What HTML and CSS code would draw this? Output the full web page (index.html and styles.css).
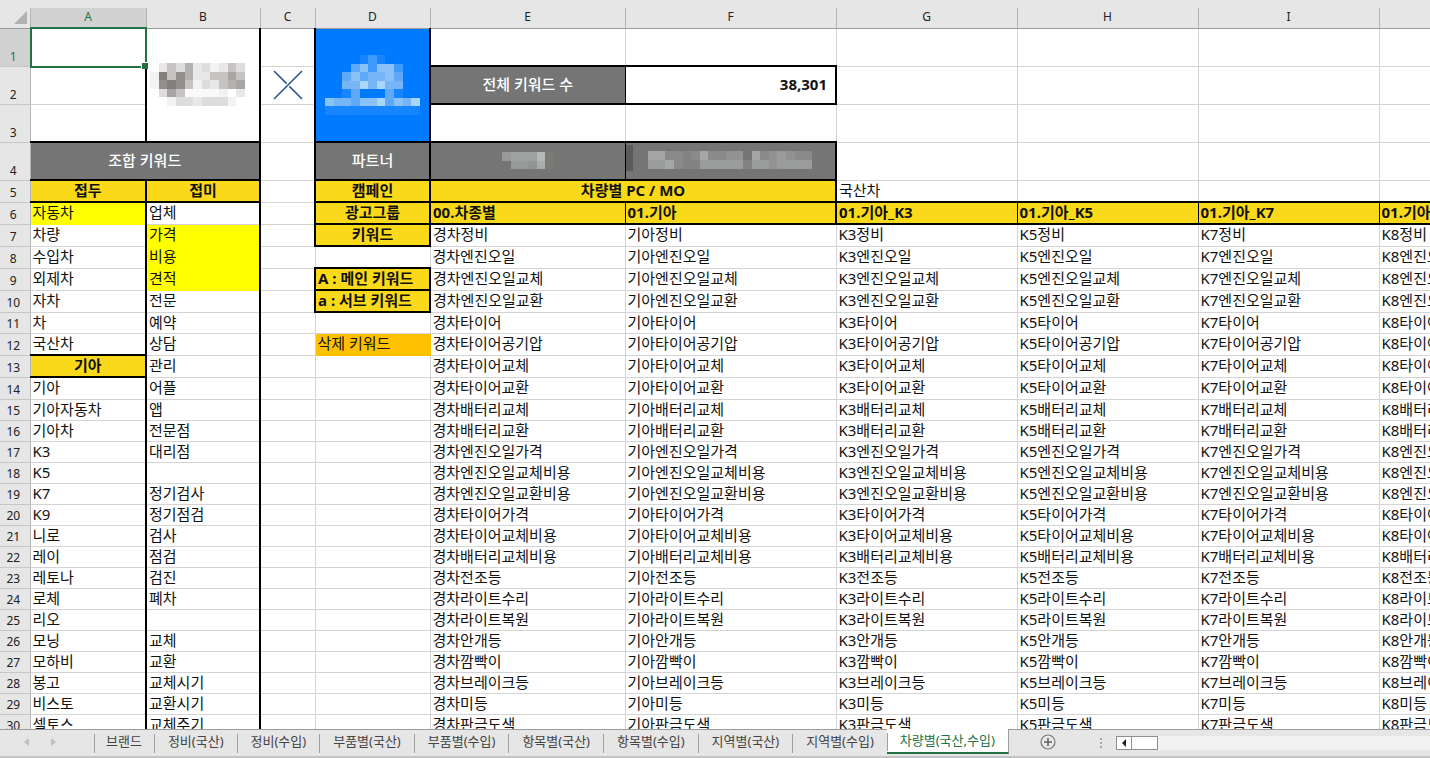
FILE: index.html
```
<!DOCTYPE html>
<html lang="ko">
<head>
<meta charset="utf-8">
<title>차량별(국산,수입)</title>
<link rel="stylesheet" href="styles.css">
</head>
<body>
<main class="sheet">
<table class="grid">
<colgroup><col class="c-head"><col class="c-a"><col class="c-b"><col class="c-c"><col class="c-d"><col class="c-e"><col class="c-f"><col class="c-g"><col class="c-g"><col class="c-g"><col></colgroup>
<thead>
<tr><th class="corner"><svg width="13" height="13" viewBox="0 0 13 13" aria-hidden="true"><path d="M13 0V13H0Z" fill="#b1b1b1"/></svg></th><th scope="col" class="active">A</th><th scope="col">B</th><th scope="col">C</th><th scope="col">D</th><th scope="col">E</th><th scope="col">F</th><th scope="col">G</th><th scope="col">H</th><th scope="col">I</th><th scope="col"></th></tr>
</thead>
<tbody>
<tr class="tall"><th scope="row" class="active">1</th><td class="vr selected"><span class="cursor"></span></td>
<td class="vr hb logo brand" rowspan="3"><svg width="95" height="43" viewBox="0 0 11 5" preserveAspectRatio="none" shape-rendering="crispEdges" aria-hidden="true">
<path fill="#e8e8e8" d="M1 0h1v1h-1zM5 0h1v1h-1zM8 0h1v1h-1zM5 1h2v1h-2zM7 2h1v1h-1zM5 4h1v1h-1zM10 3h1v1h-1z"/>
<path fill="#c6c3c2" d="M2 0h1v1h-1zM9 0h1v1h-1zM2 1h1v1h-1zM7 1h2v1h-2zM10 1h1v1h-1zM4 2h1v1h-1zM8 2h1v1h-1zM3 3h1v1h-1z"/>
<path fill="#dedddd" d="M3 0h1v1h-1zM6 0h1v1h-1zM10 0h1v1h-1zM6 2h1v1h-1zM1 3h1v1h-1zM3 4h2v1h-2zM6 4h3v1h-3z"/>
<path fill="#b4b1b0" d="M4 0h1v2h-1zM9 2h1v1h-1z"/>
<path fill="#f2f2f2" d="M7 0h1v1h-1zM0 1h1v2h-1zM5 2h1v1h-1zM8 3h1v1h-1zM2 4h1v1h-1zM9 4h1v1h-1z"/>
<path fill="#a9a5a4" d="M9 1h1v1h-1zM10 2h1v1h-1zM2 3h1v1h-1z"/>
<path fill="#837f7d" d="M1 1h1v1h-1zM2 2h1v1h-1z"/>
<path fill="#938f8d" d="M3 1h1v2h-1zM1 2h1v1h-1z"/>
<path fill="#fafafa" d="M4 3h4v1h-4z"/></svg></td>
<td class="vr"></td>
<td class="vr hb logo blue" rowspan="3"><svg width="95" height="60" viewBox="0 0 11 7" preserveAspectRatio="none" shape-rendering="crispEdges" aria-hidden="true">
<path fill="#1685ff" d="M4 0h1v1h-1zM6 0h1v1h-1zM2 4h1v1h-1zM8 4h1v1h-1zM0 6h11v1h-11z"/>
<path fill="#3e9afb" d="M5 0h1v2h-1zM8 1h1v1h-1z"/>
<path fill="#5eaaf8" d="M3 1h1v1h-1zM2 2h1v1h-1zM4 2h1v1h-1zM8 2h1v1h-1zM3 4h1v2h-1zM7 4h1v2h-1z"/>
<path fill="#76b6f6" d="M5 2h2v1h-2zM2 3h2v1h-2zM5 3h1v1h-1zM7 3h2v1h-2zM1 5h2v1h-2zM9 5h1v1h-1z"/>
<path fill="#8ac2f7" d="M4 1h1v1h-1zM6 1h2v1h-2zM3 2h1v1h-1zM7 2h1v1h-1zM0 5h1v1h-1zM4 5h2v1h-2zM8 5h1v1h-1z"/>
<path fill="#abd6fb" d="M4 3h1v1h-1zM6 3h1v1h-1zM6 5h1v1h-1zM10 5h1v1h-1z"/></svg></td>
<td class="hb"></td><td class="hb"></td><td></td><td></td><td></td><td></td></tr>
<tr class="tall"><th scope="row">2</th><td class="vr"></td><td class="vr cross"><svg width="30" height="30" viewBox="0 0 30 30" aria-label="×"><path d="M1 1 13.6 13.6M16.4 16.4 29 29M29 1 1 29" stroke="#2f5597" stroke-width="1.6" fill="none"/></svg></td><td class="gray hb vt">전체 키워드 수</td><td class="total hb vr">38,301</td><td></td><td></td><td></td><td></td></tr>
<tr class="tall"><th scope="row">3</th><td class="vr hb"></td><td class="vr"></td><td class="hb"></td><td class="hb"></td><td></td><td></td><td></td><td></td></tr>
<tr class="tall"><th scope="row">4</th><td class="gray hb vr" colspan="2">조합 키워드</td><td class="vr"></td><td class="gray hb vr">파트너</td>
<td class="gray hb vt mosaic"><svg width="52" height="17" viewBox="0 0 6 2" preserveAspectRatio="none" shape-rendering="crispEdges" aria-hidden="true"><path fill="#989a9a" d="M0 0h1v1h-1zM1 1h2v1h-2z"/><path fill="#9fa1a1" d="M1 0h3v1h-3z"/><path fill="#939595" d="M3 1h1v1h-1z"/><path fill="#b4b8b8" d="M4 0h1v1h-1z"/><path fill="#aaacac" d="M4 1h1v1h-1z"/><path fill="#7c7976" d="M5 0h1v2h-1z"/></svg></td>
<td class="gray hb vr mosaic"><span class="patch"></span><svg width="164" height="18" viewBox="0 0 19 2" preserveAspectRatio="none" shape-rendering="crispEdges" aria-hidden="true"><path fill="#8a8a8a" d="M2 0h2v1h-2zM5 0h1v1h-1zM7 0h2v1h-2zM13 0h1v1h-1zM17 0h2v1h-2zM3 1h1v1h-1z"/><path fill="#828282" d="M4 0h1v2h-1zM5 1h1v1h-1zM11 1h1v1h-1z"/><path fill="#a5a6a6" d="M0 0h2v1h-2zM6 0h1v1h-1zM12 0h1v1h-1zM2 1h1v1h-1z"/><path fill="#9a9b9b" d="M0 1h2v1h-2zM6 1h5v1h-5zM12 1h2v1h-2zM15 1h4v1h-4zM15 0h1v1h-1z"/><path fill="#929292" d="M9 0h2v1h-2zM14 0h1v2h-1zM16 0h1v1h-1z"/></svg></td><td></td><td></td><td></td><td></td></tr>
<tr><th scope="row">5</th><td class="gold hb vr">접두</td><td class="gold hb vr">접미</td><td class="vr"></td><td class="gold hb vr">캠페인</td><td class="gold hb vr" colspan="2">차량별 PC / MO</td><td class="hb">국산차</td><td class="hb"></td><td class="hb"></td><td class="hb"></td></tr>
<tr><th scope="row">6</th><td class="yellow vr">자동차</td><td class="vr">업체</td><td class="vr"></td><td class="gold hb vr">광고그룹</td><td class="gold left hb vt">00.차종별</td><td class="gold left hb vr">01.기아</td><td class="gold left hb vt">01.기아_K3</td><td class="gold left hb vt">01.기아_K5</td><td class="gold left hb vt">01.기아_K7</td><td class="gold left hb vt">01.기아_K8</td></tr>
<tr><th scope="row">7</th><td class="vr">차량</td><td class="yellow vr">가격</td><td class="vr"></td><td class="gold hb vr">키워드</td><td>경차정비</td><td>기아정비</td><td>K3정비</td><td>K5정비</td><td>K7정비</td><td>K8정비</td></tr>
<tr><th scope="row">8</th><td class="vr">수입차</td><td class="yellow vr">비용</td><td></td><td class="hb"></td><td>경차엔진오일</td><td>기아엔진오일</td><td>K3엔진오일</td><td>K5엔진오일</td><td>K7엔진오일</td><td>K8엔진오일</td></tr>
<tr><th scope="row">9</th><td class="vr">외제차</td><td class="yellow vr">견적</td><td class="vr"></td><td class="gold left hb vr">A : 메인 키워드</td><td>경차엔진오일교체</td><td>기아엔진오일교체</td><td>K3엔진오일교체</td><td>K5엔진오일교체</td><td>K7엔진오일교체</td><td>K8엔진오일교체</td></tr>
<tr><th scope="row">10</th><td class="vr">자차</td><td class="vr">전문</td><td class="vr"></td><td class="gold left hb vr">a : 서브 키워드</td><td>경차엔진오일교환</td><td>기아엔진오일교환</td><td>K3엔진오일교환</td><td>K5엔진오일교환</td><td>K7엔진오일교환</td><td>K8엔진오일교환</td></tr>
<tr class="low"><th scope="row">11</th><td class="vr">차</td><td class="vr">예약</td><td></td><td></td><td>경차타이어</td><td>기아타이어</td><td>K3타이어</td><td>K5타이어</td><td>K7타이어</td><td>K8타이어</td></tr>
<tr><th scope="row">12</th><td class="vr hb">국산차</td><td class="vr">상담</td><td></td><td class="orange">삭제 키워드</td><td>경차타이어공기압</td><td>기아타이어공기압</td><td>K3타이어공기압</td><td>K5타이어공기압</td><td>K7타이어공기압</td><td>K8타이어공기압</td></tr>
<tr><th scope="row">13</th><td class="gold vr hb">기아</td><td class="vr">관리</td><td></td><td></td><td>경차타이어교체</td><td>기아타이어교체</td><td>K3타이어교체</td><td>K5타이어교체</td><td>K7타이어교체</td><td>K8타이어교체</td></tr>
<tr><th scope="row">14</th><td class="vr">기아</td><td class="vr">어플</td><td></td><td></td><td>경차타이어교환</td><td>기아타이어교환</td><td>K3타이어교환</td><td>K5타이어교환</td><td>K7타이어교환</td><td>K8타이어교환</td></tr>
<tr class="low"><th scope="row">15</th><td class="vr">기아자동차</td><td class="vr">앱</td><td></td><td></td><td>경차배터리교체</td><td>기아배터리교체</td><td>K3배터리교체</td><td>K5배터리교체</td><td>K7배터리교체</td><td>K8배터리교체</td></tr>
<tr class="low"><th scope="row">16</th><td class="vr">기아차</td><td class="vr">전문점</td><td></td><td></td><td>경차배터리교환</td><td>기아배터리교환</td><td>K3배터리교환</td><td>K5배터리교환</td><td>K7배터리교환</td><td>K8배터리교환</td></tr>
<tr class="low"><th scope="row">17</th><td class="vr">K3</td><td class="vr">대리점</td><td></td><td></td><td>경차엔진오일가격</td><td>기아엔진오일가격</td><td>K3엔진오일가격</td><td>K5엔진오일가격</td><td>K7엔진오일가격</td><td>K8엔진오일가격</td></tr>
<tr class="low"><th scope="row">18</th><td class="vr">K5</td><td class="vr"></td><td></td><td></td><td>경차엔진오일교체비용</td><td>기아엔진오일교체비용</td><td>K3엔진오일교체비용</td><td>K5엔진오일교체비용</td><td>K7엔진오일교체비용</td><td>K8엔진오일교체비용</td></tr>
<tr class="low"><th scope="row">19</th><td class="vr">K7</td><td class="vr">정기검사</td><td></td><td></td><td>경차엔진오일교환비용</td><td>기아엔진오일교환비용</td><td>K3엔진오일교환비용</td><td>K5엔진오일교환비용</td><td>K7엔진오일교환비용</td><td>K8엔진오일교환비용</td></tr>
<tr class="low"><th scope="row">20</th><td class="vr">K9</td><td class="vr">정기점검</td><td></td><td></td><td>경차타이어가격</td><td>기아타이어가격</td><td>K3타이어가격</td><td>K5타이어가격</td><td>K7타이어가격</td><td>K8타이어가격</td></tr>
<tr class="low"><th scope="row">21</th><td class="vr">니로</td><td class="vr">검사</td><td></td><td></td><td>경차타이어교체비용</td><td>기아타이어교체비용</td><td>K3타이어교체비용</td><td>K5타이어교체비용</td><td>K7타이어교체비용</td><td>K8타이어교체비용</td></tr>
<tr class="low"><th scope="row">22</th><td class="vr">레이</td><td class="vr">점검</td><td></td><td></td><td>경차배터리교체비용</td><td>기아배터리교체비용</td><td>K3배터리교체비용</td><td>K5배터리교체비용</td><td>K7배터리교체비용</td><td>K8배터리교체비용</td></tr>
<tr class="low"><th scope="row">23</th><td class="vr">레토나</td><td class="vr">검진</td><td></td><td></td><td>경차전조등</td><td>기아전조등</td><td>K3전조등</td><td>K5전조등</td><td>K7전조등</td><td>K8전조등</td></tr>
<tr class="low"><th scope="row">24</th><td class="vr">로체</td><td class="vr">폐차</td><td></td><td></td><td>경차라이트수리</td><td>기아라이트수리</td><td>K3라이트수리</td><td>K5라이트수리</td><td>K7라이트수리</td><td>K8라이트수리</td></tr>
<tr class="low"><th scope="row">25</th><td class="vr">리오</td><td class="vr"></td><td></td><td></td><td>경차라이트복원</td><td>기아라이트복원</td><td>K3라이트복원</td><td>K5라이트복원</td><td>K7라이트복원</td><td>K8라이트복원</td></tr>
<tr class="low"><th scope="row">26</th><td class="vr">모닝</td><td class="vr">교체</td><td></td><td></td><td>경차안개등</td><td>기아안개등</td><td>K3안개등</td><td>K5안개등</td><td>K7안개등</td><td>K8안개등</td></tr>
<tr class="low"><th scope="row">27</th><td class="vr">모하비</td><td class="vr">교환</td><td></td><td></td><td>경차깜빡이</td><td>기아깜빡이</td><td>K3깜빡이</td><td>K5깜빡이</td><td>K7깜빡이</td><td>K8깜빡이</td></tr>
<tr class="low"><th scope="row">28</th><td class="vr">봉고</td><td class="vr">교체시기</td><td></td><td></td><td>경차브레이크등</td><td>기아브레이크등</td><td>K3브레이크등</td><td>K5브레이크등</td><td>K7브레이크등</td><td>K8브레이크등</td></tr>
<tr class="low"><th scope="row">29</th><td class="vr">비스토</td><td class="vr">교환시기</td><td></td><td></td><td>경차미등</td><td>기아미등</td><td>K3미등</td><td>K5미등</td><td>K7미등</td><td>K8미등</td></tr>
<tr class="low"><th scope="row">30</th><td class="vr">셀토스</td><td class="vr">교체주기</td><td></td><td></td><td>경차판금도색</td><td>기아판금도색</td><td>K3판금도색</td><td>K5판금도색</td><td>K7판금도색</td><td>K8판금도색</td></tr>
</tbody>
</table>
</main>
<footer class="bar">
<div class="steps">
<button type="button" aria-label="이전 시트"><svg width="5" height="8" viewBox="0 0 5 8"><path d="M5 0V8L0 4Z" fill="#c0c0c0"/></svg></button>
<button type="button" aria-label="다음 시트"><svg width="5" height="8" viewBox="0 0 5 8"><path d="M0 0V8L5 4Z" fill="#c0c0c0"/></svg></button>
</div>
<nav class="tabs">
<button type="button" class="short">브랜드</button><button type="button">정비(국산)</button><button type="button">정비(수입)</button><button type="button">부품별(국산)</button><button type="button">부품별(수입)</button><button type="button">항목별(국산)</button><button type="button">항목별(수입)</button><button type="button">지역별(국산)</button><button type="button">지역별(수입)</button><button type="button" class="current">차량별(국산,수입)</button>
</nav>
<button type="button" class="add" aria-label="새 시트"><svg width="16" height="16" viewBox="0 0 16 16"><circle cx="8" cy="8" r="7" fill="none" stroke="#777" stroke-width="1.2"/><path d="M8 4V12M4 8H12" stroke="#666" stroke-width="1.6"/></svg></button>
<svg class="grip" width="2" height="11" viewBox="0 0 2 11" aria-hidden="true"><path d="M0 0h2v2H0zM0 4h2v2H0zM0 8h2v2H0z" fill="#a6a6a6"/></svg>
<div class="scroll">
<button type="button" aria-label="왼쪽으로"><svg width="4" height="8" viewBox="0 0 4 8"><path d="M4 0V8L0 4Z" fill="#222"/></svg></button>
<span class="thumb"></span>
</div>
</footer>
</body>
</html>
```

FILE: styles.css
```
* { box-sizing: border-box; }
body {
  margin: 0;
  height: 100vh;
  display: flex;
  flex-direction: column;
  background: #e6e6e6;
  color: #111;
  font: 15px/20px "Noto Sans", "Noto Sans CJK KR", sans-serif;
}
button {
  border: 0;
  padding: 0;
  background: none;
  color: inherit;
  font: inherit;
}
svg { display: block; }

.sheet {
  flex: 1;
  min-height: 0;
  overflow: hidden;
  padding-top: 8px;
}
.grid {
  width: max(100%, 1560px);
  table-layout: fixed;
  border-collapse: collapse;
}
.c-head { width: 30px; }
.c-a { width: 116px; }
.c-b { width: 114px; }
.c-c { width: 55px; }
.c-d { width: 115px; }
.c-e { width: 195px; }
.c-f { width: 211px; }
.c-g { width: 181px; }

.grid th {
  padding: 0;
  background: #e6e6e6;
  border-right: 1px solid #b4b4b4;
  border-bottom: 1px solid #c6c6c6;
  font-size: 12px;
  font-weight: 400;
  line-height: 16px;
  color: #222;
}
.grid thead th {
  height: 20px;
  padding-bottom: 1px;
  border-bottom-color: #9b9b9b;
}
.grid th.active {
  background: #d2d2d2;
  color: #217346;
}
.grid .corner svg { margin: 0 3px 0 auto; }
.grid tbody th {
  vertical-align: bottom;
  padding: 0 3px 1px 0;
}
.grid td {
  padding: 0 2px 2px;
  background: #fff;
  border-right: 1px solid #d4d4d4;
  border-bottom: 1px solid #d4d4d4;
  white-space: nowrap;
  overflow: hidden;
  line-height: 18px;
}
.grid tbody tr { height: 22px; }
.grid tbody tr.low { height: 21px; }
.grid tbody tr.tall { height: 38px; }

.grid td.gray {
  background: #757575;
  color: #fff;
  font-weight: 500;
  text-align: center;
}
.grid td.gold {
  background: #fad91a;
  font-weight: 700;
  text-align: center;
}
.grid td.left { text-align: left; }
.grid td.yellow {
  background: #ff0;
  border-bottom-color: #ff0;
}
.grid td.orange {
  background: #ffc000;
  border-color: #ffc000;
}
.grid td.total {
  padding-right: 8px;
  font-weight: 700;
  text-align: right;
}
.grid td.vt { border-right: 1px solid #000; }
.grid td.vr { border-right: 2px solid #000; }
.grid td.hb { border-bottom: 2px solid #000; }

.grid td.logo {
  padding-bottom: 0;
  vertical-align: middle;
}
.grid td.logo svg { margin: 0 auto; }
.grid td.brand svg { margin-left: 1px; }
.grid td.blue { background: #007bff; }
.grid td.cross { padding-bottom: 0; }
.grid td.cross svg { margin: 0 auto; }
.grid td.mosaic { position: relative; }
.grid td.mosaic svg { margin: 0 auto; }
.patch {
  position: absolute;
  left: -1px;
  top: 2px;
  width: 8px;
  height: 26px;
  background: #5b5b5b;
}

.grid td.selected {
  position: relative;
  overflow: visible;
}
.cursor {
  position: absolute;
  inset: -2px -2px -2px -1px;
  border: 2px solid #217346;
}
.cursor::after {
  content: "";
  position: absolute;
  right: -3px;
  bottom: -3px;
  width: 6px;
  height: 6px;
  background: #217346;
  border: 1px solid #fff;
  border-width: 1px 0 0 1px;
}

.bar {
  display: flex;
  height: 29px;
  border-top: 1px solid #9b9b9b;
  border-bottom: 2px solid #c4c4c4;
  background: #e6e6e6;
  color: #444;
  font-size: 13px;
}
.steps {
  width: 94px;
  height: 24px;
  display: flex;
  align-items: center;
  gap: 22px;
  padding-left: 24px;
}
.tabs {
  display: flex;
  height: 24px;
}
.tabs button {
  position: relative;
  padding: 0 13px 3px 14px;
  white-space: nowrap;
}
.tabs .short { padding: 0 12px 3px; }
.tabs button::before {
  content: "";
  position: absolute;
  left: 0;
  top: 4px;
  bottom: 1px;
  border-left: 1px solid #a0a0a0;
}
.tabs .current {
  margin-top: -1px;
  padding: 0 13px 1px;
  background: #fff;
  border-right: 1px solid #a0a0a0;
  border-bottom: 2px solid #217346;
  color: #217346;
}
.add {
  width: 16px;
  margin: 0 44px 2px 31px;
}
.grip { margin-top: 8px; }
.scroll {
  flex: 1;
  display: flex;
  height: 14px;
  margin: 6px 0 0 14px;
  background: #f2f2f2;
}
.scroll button,
.thumb {
  background: #fff;
  border: 1px solid #8f8f8f;
}
.scroll button {
  width: 15px;
  display: grid;
  place-items: center;
  border-right: 0;
}
.thumb { width: 27px; }
```
